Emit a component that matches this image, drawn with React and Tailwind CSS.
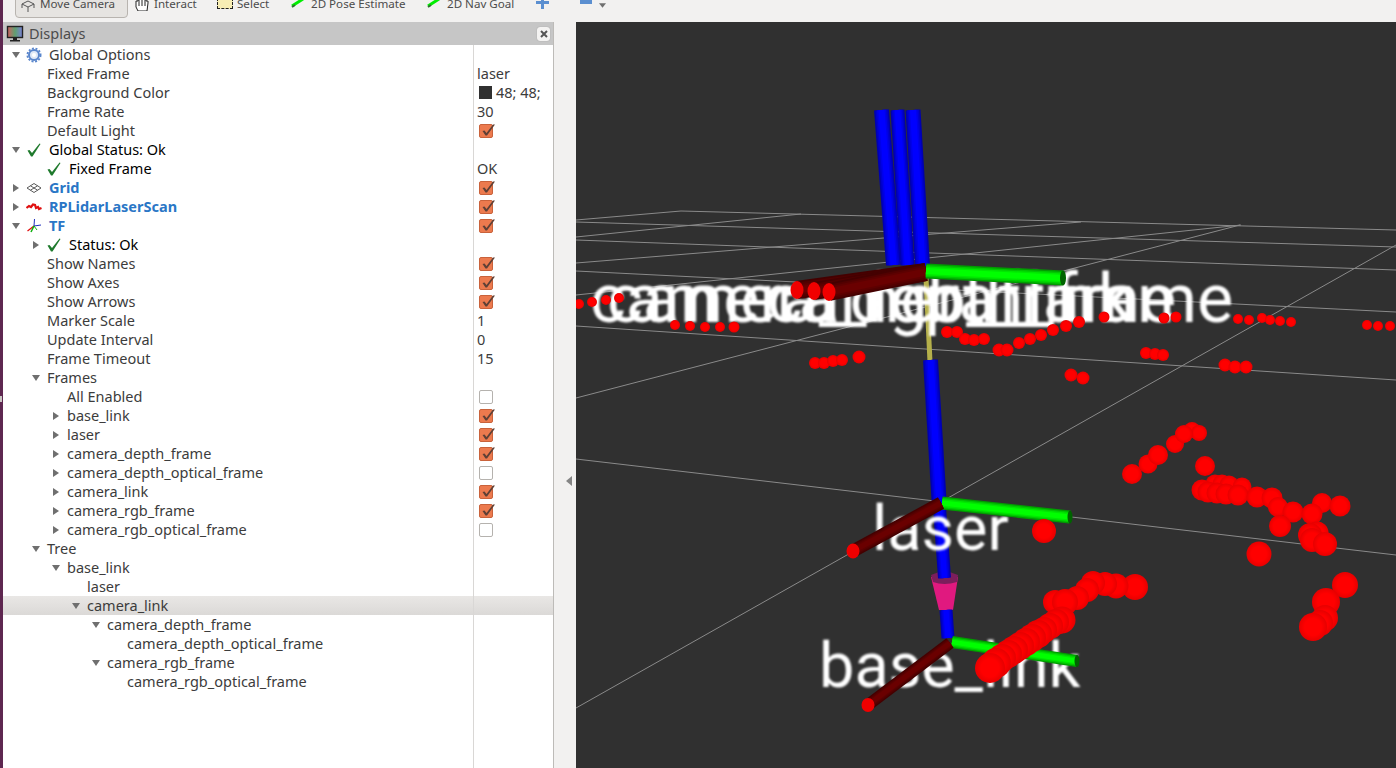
import React from 'react';

const rows = [
  { depth: 0, arrow: 'down', icon: 'gear', label: 'Global Options' },
  { depth: 1, label: 'Fixed Frame', value: 'laser' },
  { depth: 1, label: 'Background Color', color: true, value: '48; 48;' },
  { depth: 1, label: 'Frame Rate', value: '30' },
  { depth: 1, label: 'Default Light', check: true },
  { depth: 0, arrow: 'down', icon: 'ok', label: 'Global Status: Ok', dark: true },
  { depth: 1, icon: 'ok', label: 'Fixed Frame', value: 'OK', dark: true },
  { depth: 0, arrow: 'right', icon: 'grid', label: 'Grid', blue: true, check: true },
  { depth: 0, arrow: 'right', icon: 'scan', label: 'RPLidarLaserScan', blue: true, check: true },
  { depth: 0, arrow: 'down', icon: 'tf', label: 'TF', blue: true, check: true },
  { depth: 1, arrow: 'right', icon: 'ok', label: 'Status: Ok', dark: true },
  { depth: 1, label: 'Show Names', check: true },
  { depth: 1, label: 'Show Axes', check: true },
  { depth: 1, label: 'Show Arrows', check: true },
  { depth: 1, label: 'Marker Scale', value: '1' },
  { depth: 1, label: 'Update Interval', value: '0' },
  { depth: 1, label: 'Frame Timeout', value: '15' },
  { depth: 1, arrow: 'down', label: 'Frames' },
  { depth: 2, label: 'All Enabled', check: false },
  { depth: 2, arrow: 'right', label: 'base_link', check: true },
  { depth: 2, arrow: 'right', label: 'laser', check: true },
  { depth: 2, arrow: 'right', label: 'camera_depth_frame', check: true },
  { depth: 2, arrow: 'right', label: 'camera_depth_optical_frame', check: false },
  { depth: 2, arrow: 'right', label: 'camera_link', check: true },
  { depth: 2, arrow: 'right', label: 'camera_rgb_frame', check: true },
  { depth: 2, arrow: 'right', label: 'camera_rgb_optical_frame', check: false },
  { depth: 1, arrow: 'down', label: 'Tree' },
  { depth: 2, arrow: 'down', label: 'base_link' },
  { depth: 3, label: 'laser' },
  { depth: 3, arrow: 'down', label: 'camera_link', selected: true },
  { depth: 4, arrow: 'down', label: 'camera_depth_frame' },
  { depth: 5, label: 'camera_depth_optical_frame' },
  { depth: 4, arrow: 'down', label: 'camera_rgb_frame' },
  { depth: 5, label: 'camera_rgb_optical_frame' },
];

const gridLines = [
  [576, 220, 681, 211], [681, 211, 1396, 230], [576, 222, 1396, 247], [576, 237, 801, 214],
  [576, 240, 1396, 270], [576, 263, 1081, 222], [576, 271, 1396, 312], [576, 295, 1241, 225],
  [576, 326, 1396, 380], [576, 398, 1240, 225], [576, 459, 1396, 555], [576, 708, 1396, 245],
];

const dots = [
  [579, 304, 5], [592, 302, 5], [606, 300, 5], [619, 298, 5],
  [675, 325, 5], [690, 326, 5], [705, 327, 5], [720, 327, 5], [734, 327, 5.5],
  [815, 363, 6], [824, 363, 6], [833, 361, 6], [842, 360, 6], [859, 357, 6.5],
  [947, 332, 6], [957, 332, 6], [965, 339, 6], [974, 340, 6], [984, 339, 6], [999, 350, 6.5], [1007, 350, 6.5],
  [1019, 343, 6], [1030, 339, 6], [1041, 335, 6], [1053, 330, 6], [1066, 326, 6], [1079, 322, 6], [1104, 317, 5.5],
  [1164, 318, 5.5], [1176, 317, 5.5], [1146, 353, 6], [1155, 354, 6], [1163, 355, 6],
  [1071, 375, 6.5], [1083, 378, 6.5], [1225, 365, 6.5], [1235, 367, 6.5], [1246, 367, 6.5],
  [1238, 319, 5], [1249, 320, 5], [1262, 318, 5], [1270, 320, 5], [1280, 321, 5], [1291, 322, 5],
  [1367, 325, 5], [1378, 326, 5], [1390, 326, 5],
  [1132, 474, 10], [1148, 464, 9.5], [1158, 455, 10], [1175, 444, 9], [1192, 430, 8], [1199, 433, 8], [1184, 434, 9],
  [1205, 466, 10], [1215, 484, 9.5], [1222, 484, 9.5], [1229, 485, 9.5], [1242, 487, 9.5],
  [1202, 490, 10.5], [1208, 492, 10.5], [1217, 493, 10.5], [1226, 494, 10.5], [1238, 495, 10.5],
  [1257, 497, 10.5], [1272, 498, 10.5], [1278, 507, 10], [1293, 512, 10.5], [1322, 503, 10], [1340, 506, 10.5], [1312, 514, 10.5],
  [1280, 526, 11], [1317, 533, 11.5], [1310, 535, 12], [1312, 540, 12], [1325, 544, 12],
  [1259, 554, 12.5], [1345, 585, 13], [1326, 602, 14], [1325, 618, 13], [1320, 623, 13], [1313, 627, 14],
  [1044, 531, 12], [1135, 587, 13], [1116, 586, 12.5], [1105, 584, 12], [1093, 583, 12],
  [1087, 590, 12], [1077, 598, 12], [1055, 602, 12], [1065, 602, 13], [1062, 620, 13.5],
  [1056, 622, 13], [1050, 626, 13], [1044, 630, 13], [1038, 634, 14], [1032, 638, 14], [1026, 642, 14],
  [1020, 646, 14], [1014, 650, 14], [1008, 654, 14], [1002, 658, 14], [996, 663, 15], [990, 668, 15],
];

const Arrow = ({ dir }) => (
  <svg width="12" height="12" viewBox="0 0 12 12" className="block">
    {dir === 'down' && <path d="M2 3 L10 3 L6 9 Z" fill="#6f6f6f" />}
    {dir === 'right' && <path d="M3 2 L9 6 L3 10 Z" fill="#6f6f6f" />}
  </svg>
);

const RowIcon = ({ name }) => {
  if (name === 'gear') {
    return (
      <svg width="16" height="16" viewBox="0 0 16 16">
        <circle cx="8" cy="8" r="5" fill="#dfe8f6" stroke="#5a86cc" strokeWidth="2" />
        <circle cx="8" cy="8" r="6.6" fill="none" stroke="#5a86cc" strokeWidth="1.8" strokeDasharray="2 1.6" />
        <circle cx="8" cy="8" r="2" fill="#fff" />
      </svg>
    );
  }
  if (name === 'ok') {
    return (
      <svg width="16" height="16" viewBox="0 0 16 16">
        <path d="M1.5 8.5 L3.5 8 L6 11 L13.5 1.5 L14.5 2 L6.5 14.5 L5 14.5 Z" fill="#1f7a2d" />
      </svg>
    );
  }
  if (name === 'grid') {
    return (
      <svg width="16" height="16" viewBox="0 0 16 16" fill="none" stroke="#5a5a5a" strokeWidth="1">
        <path d="M1 8 L8 3.5 L15 8 L8 12.5 Z" />
        <path d="M4.5 5.8 L11.5 10.2 M11.5 5.8 L4.5 10.2" />
      </svg>
    );
  }
  if (name === 'scan') {
    return (
      <svg width="16" height="16" viewBox="0 0 16 16" fill="none" stroke="#e01010" strokeWidth="2.2">
        <path d="M0.5 9 L3 7 L5 8 L7 5.5 L9 6 L10 9 L12 8 L13 10 L15.5 9" />
      </svg>
    );
  }
  return (
    <svg width="16" height="16" viewBox="0 0 16 16" fill="none" strokeWidth="1">
      <path d="M8 8 L8.5 1" stroke="#2030c0" />
      <path d="M8 8 L15 7" stroke="#2030c0" />
      <path d="M8 8 L1.5 13" stroke="#e01010" strokeWidth="1.3" />
      <path d="M8 8 L5 14" stroke="#10b010" strokeWidth="1.5" />
      <path d="M8 8 L11 12" stroke="#10b010" />
    </svg>
  );
};

const Checkbox = ({ checked }) =>
  checked ? (
    <span className="relative block w-[14px] h-[14px] rounded-[2px] border border-[#c9623b] bg-[#ec7a4e]">
      <svg width="17" height="16" viewBox="0 0 17 16" className="absolute left-0 -top-[2px]">
        <path d="M2.5 8 L4.5 7.5 L6.5 10 L13 1.5 L15 1.5 L7 12.5 L5.5 12.5 Z" fill="#5f4036" />
      </svg>
    </span>
  ) : (
    <span className="block w-[14px] h-[14px] rounded-[2px] border border-[#b5b2ae] bg-white" />
  );

const TreeRow = ({ row }) => {
  const textColor = row.blue
    ? 'text-[#2a76c6] font-bold'
    : row.dark
      ? 'text-black'
      : 'text-[#3c3c3c]';
  return (
    <div
      className={`flex h-[19px] items-center ${
        row.selected ? 'bg-gradient-to-b from-[#e9e7e5] to-[#dbd9d7]' : ''
      }`}
    >
      <div className="flex w-[470px] items-center" style={{ paddingLeft: 7 + row.depth * 20 }}>
        <span className="w-[12px] shrink-0">
          <Arrow dir={row.arrow} />
        </span>
        {row.icon ? (
          <span className="ml-[4px] mr-[7px] w-[16px] shrink-0">
            <RowIcon name={row.icon} />
          </span>
        ) : (
          <span className="w-[5px] shrink-0" />
        )}
        <span className={`whitespace-nowrap ${textColor}`}>{row.label}</span>
      </div>
      <div className="flex h-full flex-1 items-center overflow-hidden border-l border-[#d9d7d5] pl-[3px] text-[#3c3c3c]">
        {row.color && <span className="ml-[2px] mr-[4px] h-[13px] w-[13px] shrink-0 bg-[#303030]" />}
        {row.value && <span className="whitespace-nowrap">{row.value}</span>}
        {row.check !== undefined && (
          <span className="ml-[2px]">
            <Checkbox checked={row.check} />
          </span>
        )}
      </div>
    </div>
  );
};

const Cyl = ({ a, b, w, c }) => (
  <g>
    <line x1={a[0]} y1={a[1]} x2={b[0]} y2={b[1]} stroke={c[0]} strokeWidth={w} />
    <line x1={a[0]} y1={a[1]} x2={b[0]} y2={b[1]} stroke={c[1]} strokeWidth={w * 0.8} />
    <line x1={a[0]} y1={a[1]} x2={b[0]} y2={b[1]} stroke={c[2]} strokeWidth={w * 0.6} />
    <line x1={a[0]} y1={a[1]} x2={b[0]} y2={b[1]} stroke={c[3]} strokeWidth={w * 0.4} />
  </g>
);

const BLUE = ['#0000b0', '#0000d0', '#0000ea', '#0000ff'];
const GREEN = ['#009c00', '#00c800', '#00e800', '#00ff00'];
const RED = ['#440000', '#520000', '#5e0000', '#6a0000'];

const Scene = () => {
  const labelClass = 'font-["Roboto",sans-serif]';
  return (
    <svg viewBox="576 22 820 746" className="block h-full w-full">
      <defs>
        <filter id="soft">
          <feGaussianBlur stdDeviation="1" />
        </filter>
        <radialGradient id="ball">
          <stop offset="0.6" stopColor="#ff0000" />
          <stop offset="1" stopColor="#e60000" />
        </radialGradient>
      </defs>
      {gridLines.map((l, i) => (
        <line key={i} x1={l[0]} y1={l[1]} x2={l[2]} y2={l[3]} stroke="#8a8a8a" strokeWidth="1" />
      ))}

      <Cyl a={[881.5, 110]} b={[893.5, 265]} w={15} c={BLUE} />
      <Cyl a={[897.5, 110]} b={[907.5, 265]} w={14} c={BLUE} />
      <Cyl a={[913, 110]} b={[922.5, 266]} w={15} c={BLUE} />
      <line x1="926" y1="278" x2="930" y2="362" stroke="#b5b04a" strokeWidth="5" />

      <path d="M931 577 L958 577 L953 610 L939 610 Z" fill="#e0197f" />
      <path d="M931 575 Q944 568 958 575 L957 582 Q944 586 933 582 Z" fill="#7b1e5c" />

      <Cyl a={[930.5, 360]} b={[939, 500]} w={15} c={BLUE} />
      <Cyl a={[939, 500]} b={[944.5, 578]} w={13} c={BLUE} />
      <Cyl a={[946, 610]} b={[948, 638]} w={13} c={BLUE} />

      <g filter="url(#soft)" fill="#fff" fontSize="68.5" className={labelClass}>
        <text x="590" y="322">camera_depth_frame</text>
        <text x="607" y="322">camera_rgb_frame</text>
        <text x="767" y="322">camera_link</text>
      </g>
      <g filter="url(#soft)" fill="#fff" fontSize="63" className={labelClass}>
        <text x="872" y="550">laser</text>
        <text x="819" y="687">base_link</text>
      </g>

      <Cyl a={[926, 272]} b={[797, 290]} w={18} c={RED} />
      <ellipse cx="797" cy="290" rx="6.5" ry="9" fill="#f00000" />
      <Cyl a={[926, 272]} b={[814, 291]} w={18} c={RED} />
      <ellipse cx="814" cy="291" rx="6.5" ry="9" fill="#f00000" />
      <Cyl a={[926, 272]} b={[829, 292]} w={18} c={RED} />
      <ellipse cx="829" cy="292" rx="6.5" ry="9" fill="#f00000" />
      <Cyl a={[926, 271]} b={[1063, 278]} w={15} c={GREEN} />
      <ellipse cx="1063" cy="278" rx="3" ry="7.5" fill="#006400" />

      <Cyl a={[942, 503]} b={[1070, 517]} w={13} c={GREEN} />
      <ellipse cx="1070" cy="517" rx="2.5" ry="6.5" fill="#006400" />
      <Cyl a={[941, 503]} b={[853, 551]} w={13} c={RED} />
      <ellipse cx="853" cy="551" rx="6.5" ry="7.5" fill="#f00000" />

      <Cyl a={[952, 642]} b={[1077, 661]} w={12} c={GREEN} />
      <ellipse cx="1077" cy="661" rx="2.5" ry="6" fill="#006400" />
      <Cyl a={[950, 643]} b={[868, 705]} w={12} c={RED} />
      <ellipse cx="868" cy="705" rx="6.5" ry="7" fill="#f00000" />

      {dots.map((d, i) => (
        <circle key={i} cx={d[0]} cy={d[1]} r={d[2]} fill="url(#ball)" />
      ))}
    </svg>
  );
};

const GreenArrow = () => (
  <svg width="14" height="10" viewBox="0 0 14 10" className="mt-[2px]">
    <path d="M1 8 L12 1" stroke="#00ee00" strokeWidth="3" />
    <path d="M1 9 L4 7" stroke="#2f6f2f" strokeWidth="2" />
  </svg>
);

const Toolbar = () => (
  <div className="h-[22px] shrink-0 overflow-hidden bg-[#f2f1f0] text-[11.6px] text-[#4c4c4c]">
    <div className="-mt-[6px] flex h-[24px] items-start pl-[12px]">
      <div className="flex h-[24px] w-[113px] items-start rounded-b-[4px] border border-[#b8b4af] bg-[#e6e4e1] pt-[1px]">
        <svg width="16" height="14" viewBox="0 0 16 14" className="ml-[4px] mt-[2px]" fill="none" stroke="#555" strokeWidth="1">
          <path d="M2 6 L8 3 L14 6 L8 9 Z M8 9 L8 14 M2 6 L2 10 M14 6 L14 10" />
        </svg>
        <span className="ml-[4px] whitespace-nowrap leading-[16px]">Move Camera</span>
      </div>
      <div className="ml-[7px] flex w-[76px] items-start pt-[2px]">
        <svg width="14" height="14" viewBox="0 0 14 14" fill="#fff" stroke="#222" strokeWidth="1" className="mt-[1px]">
          <path d="M1 4 L1 10 L3 14 L12 14 L13 6 L13 4 L11 4 L11 2 L9 2 L9 1 L7 1 L7 2 L5 2 L5 2 L3 3 L3 4 Z" />
          <path d="M4 3 V9 M7 2 V9 M10 3 V9" />
        </svg>
        <span className="ml-[5px] whitespace-nowrap leading-[16px]">Interact</span>
      </div>
      <div className="ml-[6px] flex w-[68px] items-start pt-[2px]">
        <span className="mt-[2px] block h-[11px] w-[16px] border border-dashed border-[#222] bg-[#f8eeb4]" />
        <span className="ml-[4px] whitespace-nowrap leading-[16px]">Select</span>
      </div>
      <div className="ml-[6px] flex w-[136px] items-start pt-[2px]">
        <GreenArrow />
        <span className="ml-[6px] whitespace-nowrap leading-[16px]">2D Pose Estimate</span>
      </div>
      <div className="flex w-[109px] items-start pt-[2px]">
        <GreenArrow />
        <span className="ml-[6px] whitespace-nowrap leading-[16px]">2D Nav Goal</span>
      </div>
      <svg width="13" height="14" viewBox="0 0 13 14" className="mt-[2px]" fill="#5b8fd0">
        <path d="M5 0 H8 V5 H13 V8 H8 V13 H5 V8 H0 V5 H5 Z" />
      </svg>
      <span className="ml-[31px] mt-[4px] block h-[6px] w-[12px] bg-[#5b8fd0]" />
      <svg width="7" height="5" viewBox="0 0 9 6" className="ml-[7px] mt-[9px]">
        <path d="M0 0 H9 L4.5 6 Z" fill="#6f6f6f" />
      </svg>
    </div>
  </div>
);

const Panel = () => (
  <div className="flex w-[551px] shrink-0 flex-col border-r border-[#bdbbb8] bg-white">
    <div className="flex h-[23px] shrink-0 items-center bg-[#c6c6c6] pl-[3px] pr-[3px]">
      <svg width="18" height="18" viewBox="0 0 18 18" className="shrink-0">
        <defs>
          <linearGradient id="screen" x1="0" x2="1" y1="0" y2="0">
            <stop offset="0" stopColor="#d06060" />
            <stop offset="0.5" stopColor="#60a070" />
            <stop offset="1" stopColor="#7a80d8" />
          </linearGradient>
        </defs>
        <rect x="1.5" y="1.5" width="15" height="11" fill="url(#screen)" stroke="#222" strokeWidth="1.4" />
        <path d="M7 13 H11 V15 H14 V16.5 H4 V15 H7 Z" fill="#222" />
      </svg>
      <span className="ml-[5px] text-[#4c4c4c]">Displays</span>
      <span className="ml-auto flex h-[14px] w-[13px] items-center justify-center rounded-[3px] bg-[#f4f3f2] shadow-[0_0_1px_#888]">
        <svg width="8" height="8" viewBox="0 0 8 8">
          <path d="M1 1 L7 7 M7 1 L1 7" stroke="#555" strokeWidth="2" />
        </svg>
      </span>
    </div>
    {rows.map((row, i) => (
      <TreeRow key={i} row={row} />
    ))}
    <div className="flex flex-1">
      <div className="w-[470px]" />
      <div className="flex-1 border-l border-[#d9d7d5]" />
    </div>
  </div>
);

export default function App() {
  return (
    <div className='flex h-[768px] w-[1396px] overflow-hidden bg-[#f2f1f0] font-["Noto_Sans",sans-serif] text-[14.5px] leading-[19px]'>
      <div className="w-[3px] shrink-0 bg-[#5e2750]">
        <div className="mt-[396px] h-[6px] w-[2px] bg-[#c9c5c2]" />
      </div>
      <div className="flex min-w-0 flex-1 flex-col">
        <Toolbar />
        <div className="flex min-h-0 flex-1">
          <Panel />
          <div className="flex w-[22px] shrink-0 justify-end pr-[4px] pt-[454px]">
            <svg width="6" height="10" viewBox="0 0 6 10" className="block">
              <path d="M6 0 V10 L0 5 Z" fill="#858585" />
            </svg>
          </div>
          <div className="min-w-0 flex-1 bg-[#303030]">
            <Scene />
          </div>
        </div>
      </div>
    </div>
  );
}
